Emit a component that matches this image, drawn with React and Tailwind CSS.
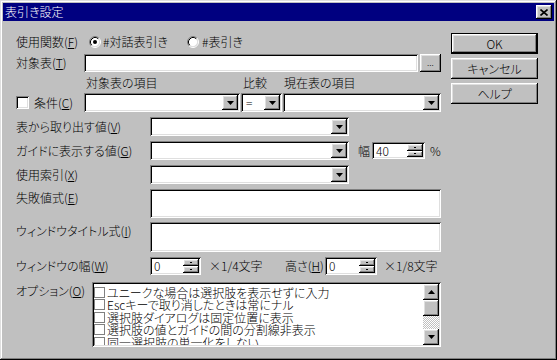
import React from 'react';

const sunken =
  'shadow-[inset_1px_1px_#808080,inset_-1px_-1px_#ffffff,inset_2px_2px_#000000,inset_-2px_-2px_#dfdfdf]';
const raised =
  'shadow-[inset_-1px_-1px_#000000,inset_1px_1px_#ffffff,inset_-2px_-2px_#808080,inset_2px_2px_#dfdfdf]';

const Key = ({ children }) => <u className="underline-offset-[1px]">{children}</u>;

const Label = ({ text, k, className = '' }) => (
  <span className={`whitespace-nowrap ${className}`}>
    {text}(<Key>{k}</Key>)
  </span>
);

const Arrow = ({ up }) => (
  <svg width="7" height="4" viewBox="0 0 7 4">
    <polygon points={up ? '3.5,0 7,4 0,4' : '0,0 7,0 3.5,4'} fill="#000" />
  </svg>
);

const Combo = ({ className = '', value = '' }) => (
  <div className={`flex h-[19px] bg-white p-[2px] ${sunken} ${className}`}>
    <div className="flex-1 pl-[3px] flex items-center overflow-hidden">{value}</div>
    <div className={`w-[16px] h-full bg-[#c0c0c0] flex items-center justify-center ${raised}`}>
      <Arrow />
    </div>
  </div>
);

const SpinHalf = () => (
  <div className={`flex-1 bg-[#c0c0c0] flex items-center justify-center ${raised}`}>
    <div className="w-[2px] h-[1px] bg-black" />
  </div>
);

const Spin = ({ className = '', value }) => (
  <div className={`flex bg-white p-[2px] ${sunken} ${className}`}>
    <div className="flex-1 pl-[2px] flex items-center">{value}</div>
    <div className="w-[16px] h-full flex flex-col">
      <SpinHalf />
      <SpinHalf />
    </div>
  </div>
);

const Radio = ({ checked }) => (
  <svg width="12" height="12" viewBox="0 0 12 12" className="shrink-0">
    <circle cx="6" cy="6" r="4.5" fill="#fff" />
    <path d="M2.11 9.89A5.5 5.5 0 0 1 9.89 2.11" stroke="#808080" fill="none" />
    <path d="M9.89 2.11A5.5 5.5 0 0 1 2.11 9.89" stroke="#fff" fill="none" />
    <path d="M2.82 9.18A4.5 4.5 0 0 1 9.18 2.82" stroke="#000" fill="none" />
    <path d="M9.18 2.82A4.5 4.5 0 0 1 2.82 9.18" stroke="#dfdfdf" fill="none" />
    {checked && <circle cx="6" cy="6" r="2" fill="#000" />}
  </svg>
);

const Button = ({ children, isDefault }) =>
  isDefault ? (
    <div className="h-[21px] border border-black">
      <div className={`h-full bg-[#c0c0c0] flex items-center justify-center ${raised}`}>{children}</div>
    </div>
  ) : (
    <div className={`h-[21px] bg-[#c0c0c0] flex items-center justify-center ${raised}`}>{children}</div>
  );

const options = [
  'ユニークな場合は選択肢を表示せずに入力',
  'Escキーで取り消したときは常にナル',
  '選択肢ダイアログは固定位置に表示',
  '選択肢の値とガイドの間の分割線非表示',
  '同一選択肢の単一化をしない',
];

export default function App() {
  return (
    <div
      className={`w-[557px] h-[360px] bg-[#c0c0c0] p-[3px] flex flex-col text-black text-[12px] leading-[12px] font-light font-['Noto_Sans_CJK_JP',sans-serif] [font-feature-settings:'palt'] shadow-[inset_-1px_-1px_#000000,inset_1px_1px_#dfdfdf,inset_-2px_-2px_#808080,inset_2px_2px_#ffffff] overflow-hidden`}
    >
      {/* Title bar */}
      <div className="h-[18px] bg-[#000080] flex items-center justify-between pl-[2px] pr-[2px]">
        <span className="text-white">表引き設定</span>
        <div className={`w-[16px] h-[14px] bg-[#c0c0c0] flex items-center justify-center ${raised}`}>
          <svg width="8" height="7" viewBox="0 0 8 7">
            <path d="M0.5 0.5L7.5 6.5M7.5 0.5L0.5 6.5" stroke="#000" strokeWidth="1.6" />
          </svg>
        </div>
      </div>

      {/* Body */}
      <div className="flex pt-[12px] pl-[13px] pr-[16px]">
        <div className="w-[425px] flex flex-col">
          {/* 使用関数 */}
          <div className="h-[17px] flex items-center">
            <Label text="使用関数" k="F" className="w-[73px]" />
            <div className="w-[98px] flex items-center">
              <Radio checked />
              <span className="ml-[2px]">#対話表引き</span>
            </div>
            <Radio />
            <span className="ml-[3px]">#表引き</span>
          </div>

          {/* 対象表 */}
          <div className="mt-[4px] h-[18px] flex items-center">
            <Label text="対象表" k="T" className="w-[68px]" />
            <div className={`w-[334px] h-full bg-white ${sunken}`} />
            <div className={`ml-[2px] w-[21px] h-full bg-[#c0c0c0] flex items-center justify-center text-[9px] ${raised}`}>
              ...
            </div>
          </div>

          {/* headers */}
          <div className="mt-[3px] h-[14px] flex items-end pl-[70px]">
            <span className="w-[157px]">対象表の項目</span>
            <span className="w-[41px]">比較</span>
            <span>現在表の項目</span>
          </div>

          {/* 条件 */}
          <div className="mt-[4px] h-[19px] flex items-center">
            <div className="w-[68px] flex items-center">
              <div className={`w-[13px] h-[13px] bg-white ${sunken}`} />
              <Label text="条件" k="C" className="ml-[5px]" />
            </div>
            <Combo className="w-[156px]" />
            <Combo className="ml-[1px] w-[41px]" value="=" />
            <Combo className="ml-[1px] w-[158px]" />
          </div>

          <div className="mt-[5px] h-[19px] flex items-center">
            <Label text="表から取り出す値" k="V" className="w-[134px]" />
            <Combo className="w-[199px]" />
          </div>

          <div className="mt-[5px] h-[19px] flex items-center">
            <Label text="ガイドに表示する値" k="G" className="w-[134px]" />
            <Combo className="w-[199px]" />
            <span className="ml-[9px]">幅</span>
            <Spin className="ml-[2px] w-[53px] h-[17px]" value="40" />
            <span className="ml-[5px]">%</span>
          </div>

          <div className="mt-[5px] h-[19px] flex items-center">
            <Label text="使用索引" k="X" className="w-[134px]" />
            <Combo className="w-[199px]" />
          </div>

          <div className="mt-[5px] h-[29px] flex items-start">
            <Label text="失敗値式" k="E" className="w-[134px] pt-[3px]" />
            <div className={`w-[291px] h-full bg-white ${sunken}`} />
          </div>

          <div className="mt-[4px] h-[30px] flex items-start">
            <Label text="ウィンドウタイトル式" k="I" className="w-[134px] pt-[3px]" />
            <div className={`w-[291px] h-full bg-white ${sunken}`} />
          </div>

          <div className="mt-[5px] h-[18px] flex items-center">
            <Label text="ウィンドウの幅" k="W" className="w-[134px]" />
            <Spin className="w-[51px] h-full" value="0" />
            <span className="ml-[8px] w-[76px]">×1/4文字</span>
            <Label text="高さ" k="H" className="w-[40px]" />
            <Spin className="w-[52px] h-full" value="0" />
            <span className="ml-[7px]">×1/8文字</span>
          </div>

          {/* オプション */}
          <div className="mt-[7px] h-[65px] flex items-start">
            <Label text="オプション" k="O" className="w-[76px] pt-[3px]" />
            <div className={`w-[349px] h-full bg-white p-[2px] flex ${sunken}`}>
              <div className="flex-1 overflow-hidden pt-[2px]">
                {options.map((o) => (
                  <div key={o} className="h-[12.5px] flex items-center whitespace-nowrap">
                    <div className="w-[11px] h-[11px] border border-[#808080] bg-white shrink-0" />
                    <span className="ml-[2px] leading-[11px]">{o}</span>
                  </div>
                ))}
              </div>
              <div className="w-[16px] h-full flex flex-col">
                <div className={`h-[16px] bg-[#c0c0c0] flex items-center justify-center ${raised}`}>
                  <Arrow up />
                </div>
                <div className={`h-[16px] bg-[#c0c0c0] ${raised}`} />
                <div className="flex-1 bg-[repeating-conic-gradient(#ffffff_0_25%,#c0c0c0_0_50%)] [background-size:2px_2px]" />
                <div className={`h-[16px] bg-[#c0c0c0] flex items-center justify-center ${raised}`}>
                  <Arrow />
                </div>
              </div>
            </div>
          </div>
        </div>

        {/* Buttons */}
        <div className="ml-[10px] w-[87px] flex flex-col gap-[4px]">
          <Button isDefault>OK</Button>
          <Button>キャンセル</Button>
          <Button>ヘルプ</Button>
        </div>
      </div>
    </div>
  );
}
